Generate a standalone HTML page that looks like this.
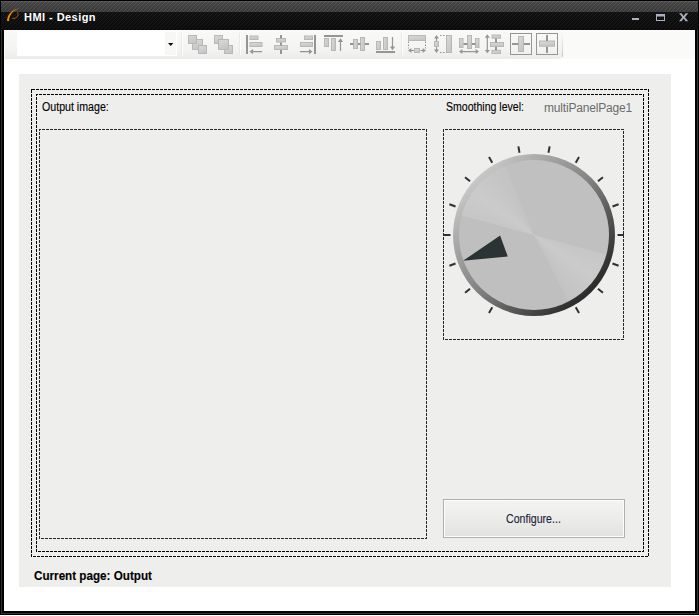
<!DOCTYPE html>
<html><head><meta charset="utf-8"><title>HMI - Design</title>
<style>
html,body{margin:0;padding:0;}
body{width:699px;height:616px;overflow:hidden;background:#fff;position:relative;font-family:"Liberation Sans",sans-serif;font-size:11px;color:#000;}
.abs{position:absolute;}
#frame{left:0;top:0;width:699px;height:615px;background:#000;}
#frame-g{left:1px;top:1px;width:695px;height:611px;border:1px solid #333;}
#client{left:4px;top:30px;width:691px;height:581px;background:#fff;}
#tb-top{left:1px;top:1px;width:697px;height:11px;
 background:repeating-linear-gradient(135deg, rgba(255,255,255,0.09) 0, rgba(255,255,255,0.09) 0.75px, rgba(255,255,255,0) 0.75px, rgba(255,255,255,0) 2.83px), linear-gradient(#5e5e5e 0,#444 1.5px,#3a3a3a 100%);}
#tb-bot{left:1px;top:12px;width:697px;height:18px;
 background:repeating-linear-gradient(135deg, rgba(255,255,255,0.05) 0, rgba(255,255,255,0.05) 0.75px, rgba(255,255,255,0) 0.75px, rgba(255,255,255,0) 2.83px), linear-gradient(#111 0,#0b0b0b 100%);}
#title{left:24px;top:10px;height:14px;line-height:14px;color:#fff;font-weight:bold;font-size:11px;letter-spacing:0.45px;white-space:nowrap;}
#strip{left:4px;top:30px;width:691px;height:29px;background:#fafaf8;}
#toolbar{left:5px;top:31px;width:557px;height:28px;background:linear-gradient(#f9f9f7 0,#f4f4f2 60%,#efefed 86%,#ececea 100%);border-radius:0 2px 4px 0;}
#tbedge{left:562px;top:33px;width:1px;height:24px;background:linear-gradient(rgba(200,200,200,0),#c6c6c4);}
#combo{left:17px;top:31px;width:160px;height:25px;background:#fff;}
#combobtn{left:165px;top:32px;width:11px;height:23px;background:#f7f7f6;}
.sep{width:1px;height:22px;top:33px;background:#e9e9e7;box-shadow:1px 0 0 #fefefe;}
#panel{left:19px;top:74px;width:652px;height:513px;background:#eeeeec;}
.lbl{white-space:nowrap;height:14px;line-height:14px;}
.sx{font-size:12px;transform-origin:0 0;-webkit-text-stroke:0.12px currentColor;}
#btn{left:443px;top:499px;width:180px;height:37px;border:1px solid #b0b2a9;background:linear-gradient(#f4f4f3 0,#ececeb 50%,#e2e2e1 100%);box-shadow:inset 0 0 0 1px #fdfdfd;}
#knob-ring{left:453px;top:154px;width:162px;height:162px;border-radius:50%;background:linear-gradient(135deg,#c8c8c8 14.6%,#b0b0b0 25%,#828282 50%,#424242 75%,#2a2a2a 85.4%);}
#knob-face{left:459px;top:160px;width:150px;height:150px;border-radius:50%;
 background:conic-gradient(from 0deg,#c0c0c0 0deg,#c0c0c0 105deg,#c6c6c6 105deg,#cbcbcb 125deg,#c3c3c3 152deg,#bfbfbf 153deg,#bfbfbf 285deg,#c6c6c6 285deg,#cbcbcb 305deg,#c3c3c3 337deg,#c0c0c0 338deg,#c0c0c0 360deg);}
</style></head><body>
<div class="abs" id="frame"></div>
<div class="abs" id="frame-g"></div>
<div class="abs" id="tb-top"></div>
<div class="abs" id="tb-bot"></div>
<div class="abs" id="client"></div>

<svg class="abs" style="left:0;top:0" width="30" height="30" viewBox="0 0 30 30">
 <path d="M7 20.9 C7.3 14.6 12 9.4 20 8.1 C13.4 10 9.4 14.8 9 20.9 Z" fill="#f28c00"/>
 <path d="M17.6 12.2 C19 15.6 17 18.9 12.2 18.4" fill="none" stroke="#e88400" stroke-width="0.75" stroke-opacity="0.9"/>
</svg>
<div class="abs" id="title">HMI - Design</div>

<svg class="abs" style="left:625px;top:5px" width="70" height="24" viewBox="625 5 70 24" fill="#a9b0bd">
 <rect x="632" y="18" width="7" height="2"/>
 <path d="M656 14h9v7h-9z M657 16.5v3.5h7v-3.5z" fill-rule="evenodd"/>
 <path d="M679 13.2h2.6l2 2.7 2-2.7h2.6l-3.3 4 3.3 4h-2.6l-2-2.7-2 2.7h-2.6l3.3-4z"/>
</svg>

<div class="abs" id="strip"></div>
<div class="abs" id="toolbar"></div>
<div class="abs" id="tbedge"></div>
<div class="abs" id="combo"></div>
<div class="abs" id="combobtn"></div>
<svg class="abs" style="left:167px;top:42px" width="8" height="5" viewBox="0 0 8 5"><path d="M1 0.9h5.4L3.7 4.1z" fill="#111"/></svg>
<div class="abs sep" style="left:181px"></div>
<div class="abs sep" style="left:239px"></div>
<div class="abs sep" style="left:401px"></div>

<svg class="abs" style="left:180px;top:30px" width="390" height="28" viewBox="180 30 390 28">
<defs>
 <linearGradient id="g" x1="0" y1="0" x2="0.4" y2="1"><stop offset="0" stop-color="#dadada"/><stop offset="1" stop-color="#c6c6c6"/></linearGradient>
 <linearGradient id="gh" x1="0" y1="0" x2="1" y2="0.4"><stop offset="0" stop-color="#dadada"/><stop offset="1" stop-color="#c6c6c6"/></linearGradient>
</defs>
<g fill="url(#g)" stroke="#b8b8b8" stroke-width="1">
 <!-- icon 1 -->
 <rect x="192.5" y="39.5" width="10" height="10"/>
 <rect x="188.5" y="35.5" width="8" height="8"/>
 <rect x="198.5" y="45.5" width="8" height="8"/>
 <!-- icon 2 -->
 <rect x="214.5" y="35.5" width="8" height="8"/>
 <rect x="224.5" y="45.5" width="8" height="8"/>
 <rect x="218.5" y="39.5" width="10" height="10"/>
 <!-- icon 3 align left -->
 <rect x="250" y="36" width="8" height="3.5"/>
 <rect x="250" y="42.5" width="12" height="4"/>
 <!-- icon 4 align center -->
 <rect x="276.5" y="38.5" width="9" height="3.5"/>
 <rect x="274.5" y="45.5" width="13" height="4"/>
 <!-- icon 5 align right -->
 <rect x="304.5" y="36" width="8" height="3.5"/>
 <rect x="300.5" y="42.5" width="12" height="4"/>
</g>
<g fill="url(#gh)" stroke="#b8b8b8" stroke-width="1">
 <!-- icon 6 align top -->
 <rect x="324.5" y="38.5" width="4" height="8"/>
 <rect x="331.5" y="38.5" width="4" height="12"/>
 <!-- icon 7 align middle -->
 <rect x="353.5" y="39.5" width="4" height="9"/>
 <rect x="360.5" y="37.5" width="4" height="13"/>
 <!-- icon 8 align bottom -->
 <rect x="376.5" y="41.5" width="4" height="8"/>
 <rect x="383.5" y="37.5" width="4" height="12"/>
</g>
<g fill="#959595">
 <rect x="246" y="35" width="2" height="19"/>
 <rect x="280" y="35" width="2" height="3.5"/><rect x="280" y="42.5" width="2" height="3"/><rect x="280" y="50" width="2" height="4"/>
 <rect x="314" y="35" width="2" height="19"/>
 <rect x="324" y="35" width="19" height="2"/>
 <rect x="350" y="43" width="3.5" height="2"/><rect x="358" y="43" width="2.5" height="2"/><rect x="365" y="43" width="4" height="2"/>
 <rect x="376" y="51" width="19" height="2"/>
 <!-- arrows -->
 <path d="M249.5 51.6l3.6-2.6v2h9v1.2h-9v2z"/>
 <path d="M312.5 51.6l-3.6-2.6v2h-9v1.2h9v2z"/>
 <path d="M340.5 38.3l2.6 3.7h-2v9h-1.2v-9h-2z"/>
 <path d="M392.5 50.3l2.6-3.7h-2v-9.6h-1.2v9.6h-2z"/>
</g>
<!-- icon 9 same width -->
<g fill="url(#g)" stroke="#b8b8b8" stroke-width="1">
 <rect x="408.5" y="35.5" width="17" height="5"/>
 <rect x="414.5" y="48.5" width="5" height="4"/>
 <rect x="446.5" y="35.5" width="5" height="17"/>
 <rect x="434.5" y="41.5" width="4" height="5"/>
 <rect x="459.5" y="38.5" width="3.5" height="9"/>
 <rect x="467.5" y="35.5" width="4" height="13"/>
 <rect x="475.5" y="38.5" width="3.5" height="9"/>
 <rect x="492" y="35" width="8.5" height="3.2"/>
 <rect x="490.5" y="42.5" width="13" height="4"/>
 <rect x="492" y="50.3" width="8.5" height="3.2"/>
 <rect x="518.5" y="36.5" width="5" height="15"/>
 <rect x="539.5" y="41" width="15" height="5.2"/>
</g>
<g stroke="#909090" stroke-width="1" fill="none" stroke-dasharray="1.5 1.5">
 <path d="M408.5 41.5v7"/><path d="M425.5 41.5v7"/>
 <path d="M440 35.5h6.5"/><path d="M440 52.5h6.5"/>
</g>
<g fill="#959595">
 <path d="M408 50.5l3.4-2.5v1.9h2.6v1.2h-2.6v1.9z"/>
 <path d="M426 50.5l-3.4-2.5v1.9h-2.2v1.2h2.2v1.9z"/>
 <path d="M436.5 35l2.5 3.4h-1.9v2.6h-1.2v-2.6h-1.9z"/>
 <path d="M436.5 53l2.5-3.4h-1.9v-2.4h-1.2v2.4h-1.9z"/>
 <rect x="463.5" y="43" width="4" height="2"/><rect x="472" y="43" width="3.5" height="2"/>
 <path d="M459 51.6l3.4-2.5v1.9h13.2v-1.9l3.4 2.5-3.4 2.5v-1.9h-13.2v1.9z"/>
 <path d="M487.3 34.3l2.5 3.4h-1.9v12.2h1.9l-2.5 3.4-2.5-3.4h1.9v-12.2h-1.9z"/>
 <rect x="495" y="38.5" width="2" height="4"/><rect x="495" y="47" width="2" height="3.3"/>
 <rect x="512" y="43" width="6.5" height="2"/><rect x="524" y="43" width="6" height="2"/>
 <rect x="546" y="35" width="2" height="6"/><rect x="546" y="46.7" width="2" height="6.3"/>
</g>
<g fill="none" stroke="#969696" stroke-width="1">
 <rect x="510.5" y="33.5" width="21" height="21"/>
 <rect x="536.5" y="33.5" width="21" height="21"/>
</g>
</svg>

<div class="abs" id="panel"></div>
<svg class="abs" style="left:0;top:0" width="699" height="616" viewBox="0 0 699 616">
<g stroke="#000" stroke-width="1" stroke-dasharray="3 1" fill="none">
<line x1="31" y1="89.5" x2="649" y2="89.5" stroke-dashoffset="3"/>
<line x1="648.5" y1="89" x2="648.5" y2="557" stroke-dashoffset="0"/>
<line x1="649" y1="556.5" x2="31" y2="556.5" stroke-dashoffset="3"/>
<line x1="31.5" y1="557" x2="31.5" y2="89" stroke-dashoffset="0"/>
</g>
<rect x="31" y="89" width="1" height="1" fill="#000"/>
<g stroke="#000" stroke-width="1" stroke-dasharray="3 1" fill="none">
<line x1="36" y1="94.5" x2="644" y2="94.5" stroke-dashoffset="1"/>
<line x1="643.5" y1="94" x2="643.5" y2="552" stroke-dashoffset="0"/>
<line x1="644" y1="551.5" x2="36" y2="551.5" stroke-dashoffset="1"/>
<line x1="36.5" y1="552" x2="36.5" y2="94" stroke-dashoffset="0"/>
</g>
<rect x="36" y="94" width="1" height="1" fill="#000"/>
<g stroke="#262626" stroke-width="1" stroke-dasharray="3 1" fill="none">
<line x1="39" y1="129.5" x2="427" y2="129.5" stroke-dashoffset="1"/>
<line x1="426.5" y1="129" x2="426.5" y2="539" stroke-dashoffset="0"/>
<line x1="427" y1="538.5" x2="39" y2="538.5" stroke-dashoffset="1"/>
<line x1="39.5" y1="539" x2="39.5" y2="129" stroke-dashoffset="0"/>
</g>
<rect x="39" y="129" width="1" height="1" fill="#262626"/>
<g stroke="#262626" stroke-width="1" stroke-dasharray="3 1" fill="none">
<line x1="443" y1="129.5" x2="624" y2="129.5" stroke-dashoffset="2"/>
<line x1="623.5" y1="129" x2="623.5" y2="340" stroke-dashoffset="2"/>
<line x1="624" y1="339.5" x2="443" y2="339.5" stroke-dashoffset="0"/>
<line x1="443.5" y1="340" x2="443.5" y2="129" stroke-dashoffset="0"/>
</g>
<rect x="443" y="129" width="1" height="1" fill="#262626"/>
</svg>

<div class="abs lbl sx" style="left:41.6px;top:100px;transform:scaleX(0.886)">Output image:</div>
<div class="abs lbl sx" style="left:446px;top:100px;transform:scaleX(0.879)">Smoothing level:</div>
<div class="abs lbl" style="left:544px;top:101px;font-size:12px;color:#6c6c6c;letter-spacing:-0.18px">multiPanelPage1</div>

<div class="abs" id="knob-ring"></div>
<div class="abs" id="knob-face"></div>
<svg class="abs" style="left:0;top:0" width="699" height="616" viewBox="0 0 699 616">
 <g stroke="#2b3335" stroke-width="2">
<line x1="492.25" y1="307.31" x2="489.00" y2="312.94"/>
<line x1="470.04" y1="288.67" x2="465.06" y2="292.85"/>
<line x1="455.54" y1="263.56" x2="449.43" y2="265.78"/>
<line x1="450.50" y1="235.00" x2="444.00" y2="235.00"/>
<line x1="455.54" y1="206.44" x2="449.43" y2="204.22"/>
<line x1="470.04" y1="181.33" x2="465.06" y2="177.15"/>
<line x1="492.25" y1="162.69" x2="489.00" y2="157.06"/>
<line x1="519.50" y1="152.77" x2="518.37" y2="146.37"/>
<line x1="548.50" y1="152.77" x2="549.63" y2="146.37"/>
<line x1="575.75" y1="162.69" x2="579.00" y2="157.06"/>
<line x1="597.96" y1="181.33" x2="602.94" y2="177.15"/>
<line x1="612.46" y1="206.44" x2="618.57" y2="204.22"/>
<line x1="617.50" y1="235.00" x2="624.00" y2="235.00"/>
<line x1="612.46" y1="263.56" x2="618.57" y2="265.78"/>
<line x1="597.96" y1="288.67" x2="602.94" y2="292.85"/>
<line x1="575.75" y1="307.31" x2="579.00" y2="312.94"/>
 </g>
 <polygon points="463.05,260.82 500.10,235.42 507.76,256.47" fill="#2b3335"/>
</svg>

<div class="abs" id="btn"></div>
<div class="abs lbl sx" style="left:506.4px;top:512px;transform:scaleX(0.884);color:#1c2238">Configure...</div>
<div class="abs lbl sx" style="left:34px;top:569px;font-weight:bold;transform:scaleX(0.972)">Current page: Output</div>
</body></html>
